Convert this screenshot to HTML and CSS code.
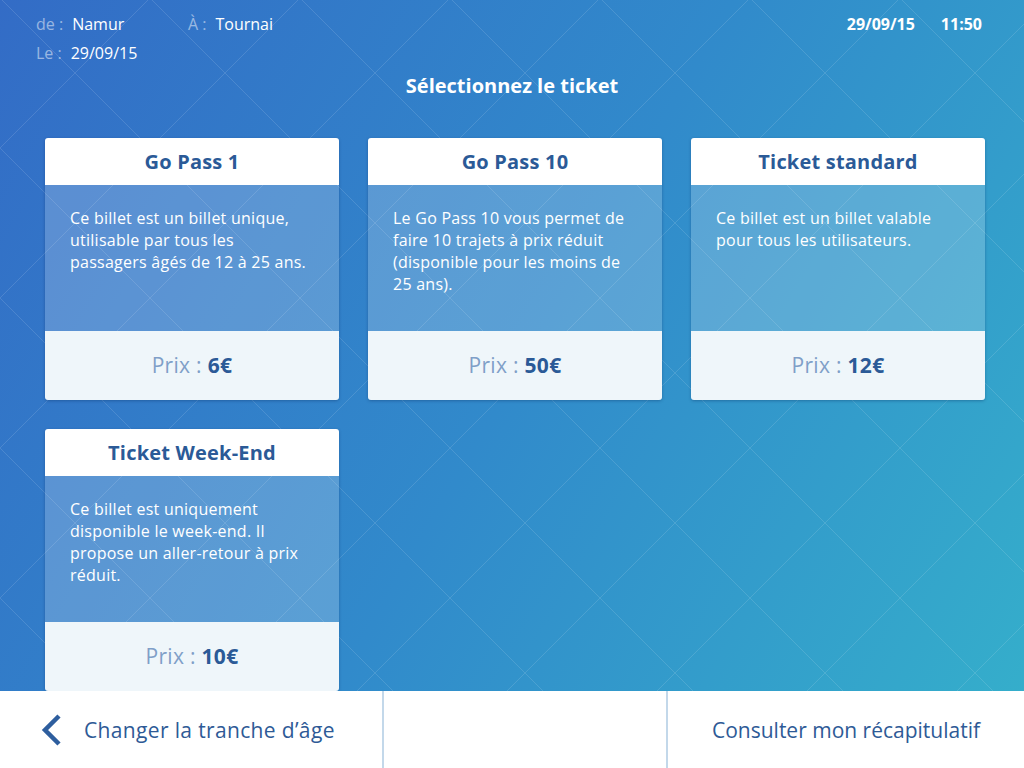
FILE: index.html
```html
<!DOCTYPE html>
<html lang="fr">
<head>
<meta charset="utf-8">
<title>Sélectionnez le ticket</title>
<link rel="stylesheet" href="styles.css">
</head>
<body>
<div class="screen">
  <main class="main">
    <header class="top">
      <div class="trip">
        <div class="trip-row">
          <span class="group group-from"><span class="label">de :</span><span class="val">Namur</span></span>
          <span class="group"><span class="label">À :</span><span class="val">Tournai</span></span>
        </div>
        <div class="trip-row">
          <span class="group"><span class="label">Le :</span><span class="val">29/09/15</span></span>
        </div>
      </div>
      <div class="clock">
        <span>29/09/15</span>
        <span>11:50</span>
      </div>
    </header>
    <h1 class="title">Sélectionnez le ticket</h1>
    <section class="cards">
      <article class="card">
        <h2 class="card-head">Go Pass 1</h2>
        <p class="card-body">Ce billet est un billet unique, utilisable par tous les passagers âgés de 12 à 25 ans.</p>
        <div class="card-foot"><span class="price-label">Prix :</span> <span class="price">6€</span></div>
      </article>
      <article class="card">
        <h2 class="card-head">Go Pass 10</h2>
        <p class="card-body">Le Go Pass 10 vous permet de faire 10 trajets à prix réduit (disponible pour les moins de 25 ans).</p>
        <div class="card-foot"><span class="price-label">Prix :</span> <span class="price">50€</span></div>
      </article>
      <article class="card">
        <h2 class="card-head">Ticket standard</h2>
        <p class="card-body">Ce billet est un billet valable pour tous les utilisateurs.</p>
        <div class="card-foot"><span class="price-label">Prix :</span> <span class="price">12€</span></div>
      </article>
      <article class="card">
        <h2 class="card-head">Ticket Week-End</h2>
        <p class="card-body">Ce billet est uniquement disponible le week-end. Il propose un aller-retour à prix réduit.</p>
        <div class="card-foot"><span class="price-label">Prix :</span> <span class="price">10€</span></div>
      </article>
    </section>
  </main>
  <nav class="bottom">
    <a class="btn btn-back" href="#">
      <svg class="chev" width="22" height="32" viewBox="0 0 22 32" aria-hidden="true"><polyline points="19,2 5,16 19,30" fill="none" stroke="#2e5e9e" stroke-width="4.5" stroke-linecap="butt" stroke-linejoin="miter"/></svg>
      <span>Changer la tranche d’âge</span>
    </a>
    <div class="btn btn-empty"></div>
    <a class="btn btn-next" href="#">Consulter mon récapitulatif</a>
  </nav>
</div>
</body>
</html>
```

FILE: styles.css
```css
* { box-sizing: border-box; }
html, body { margin: 0; padding: 0; }
body {
  width: 1024px;
  height: 768px;
  overflow: hidden;
  font-family: "Open Sans", "Lato", sans-serif;
}
.screen {
  display: flex;
  flex-direction: column;
  height: 768px;
}
.main {
  flex: 1;
  background:
    linear-gradient(45deg, transparent calc(50% - 0.6px), rgba(255,255,255,0.12) 50%, transparent calc(50% + 0.6px)),
    linear-gradient(-45deg, transparent calc(50% - 0.6px), rgba(255,255,255,0.12) 50%, transparent calc(50% + 0.6px)),
    linear-gradient(120deg, #336cc6 0%, #318acb 50%, #35b0cb 100%);
  background-size: 150px 150px, 150px 150px, 1024px 768px;
  background-position: 0 -2px, 0 -2px, 0 0;
  color: #fff;
  overflow: hidden;
}
.top {
  display: flex;
  justify-content: space-between;
  padding: 10px 42px 0 36px;
  font-size: 16px;
  line-height: 29px;
}
.trip-row { display: flex; }
.group { display: flex; }
.group-from { width: 152px; }
.label { color: rgba(255,255,255,0.5); margin-right: 9px; }
.clock { display: flex; gap: 26px; font-weight: 700; height: 29px; }
.title {
  margin: 4px 0 0;
  text-align: center;
  font-size: 20px;
  line-height: 28px;
  font-weight: 700;
}
.cards {
  display: grid;
  grid-template-columns: repeat(3, 294px);
  gap: 29px;
  padding-left: 45px;
  margin-top: 38px;
}
.card {
  display: grid;
  grid-template-rows: 47px 146px 69px;
  border-radius: 3px;
  overflow: hidden;
  box-shadow: 0 1px 3px rgba(10,40,90,0.35);
}
.card-head {
  margin: 0;
  background: #fff;
  color: #2b5a97;
  font-size: 20px;
  font-weight: 700;
  text-align: center;
  line-height: 47px;
  letter-spacing: 0.2px;
}
.card-body {
  margin: 0;
  background: rgba(255,255,255,0.2);
  padding: 22px 26px 0 25px;
  font-size: 16px;
  line-height: 22px;
  letter-spacing: 0.25px;
  color: #fff;
}
.card-foot {
  background: #eff6fa;
  text-align: center;
  font-size: 21px;
  line-height: 69px;
  letter-spacing: 0.3px;
}
.price-label { color: #7f9fc8; }
.price { color: #2b5a97; font-weight: 700; }
.bottom {
  height: 77px;
  display: grid;
  grid-template-columns: 382px 284px 1fr;
  background: #fff;
}
.btn {
  display: flex;
  align-items: center;
  text-decoration: none;
  color: #2e5a96;
  font-size: 21px;
}
.btn-empty, .btn-next { border-left: 2px solid #c3d8ea; }
.btn-back { padding-left: 40px; gap: 22px; letter-spacing: 0.35px; }
.btn-next { justify-content: center; }
.chev { display: block; }
```
